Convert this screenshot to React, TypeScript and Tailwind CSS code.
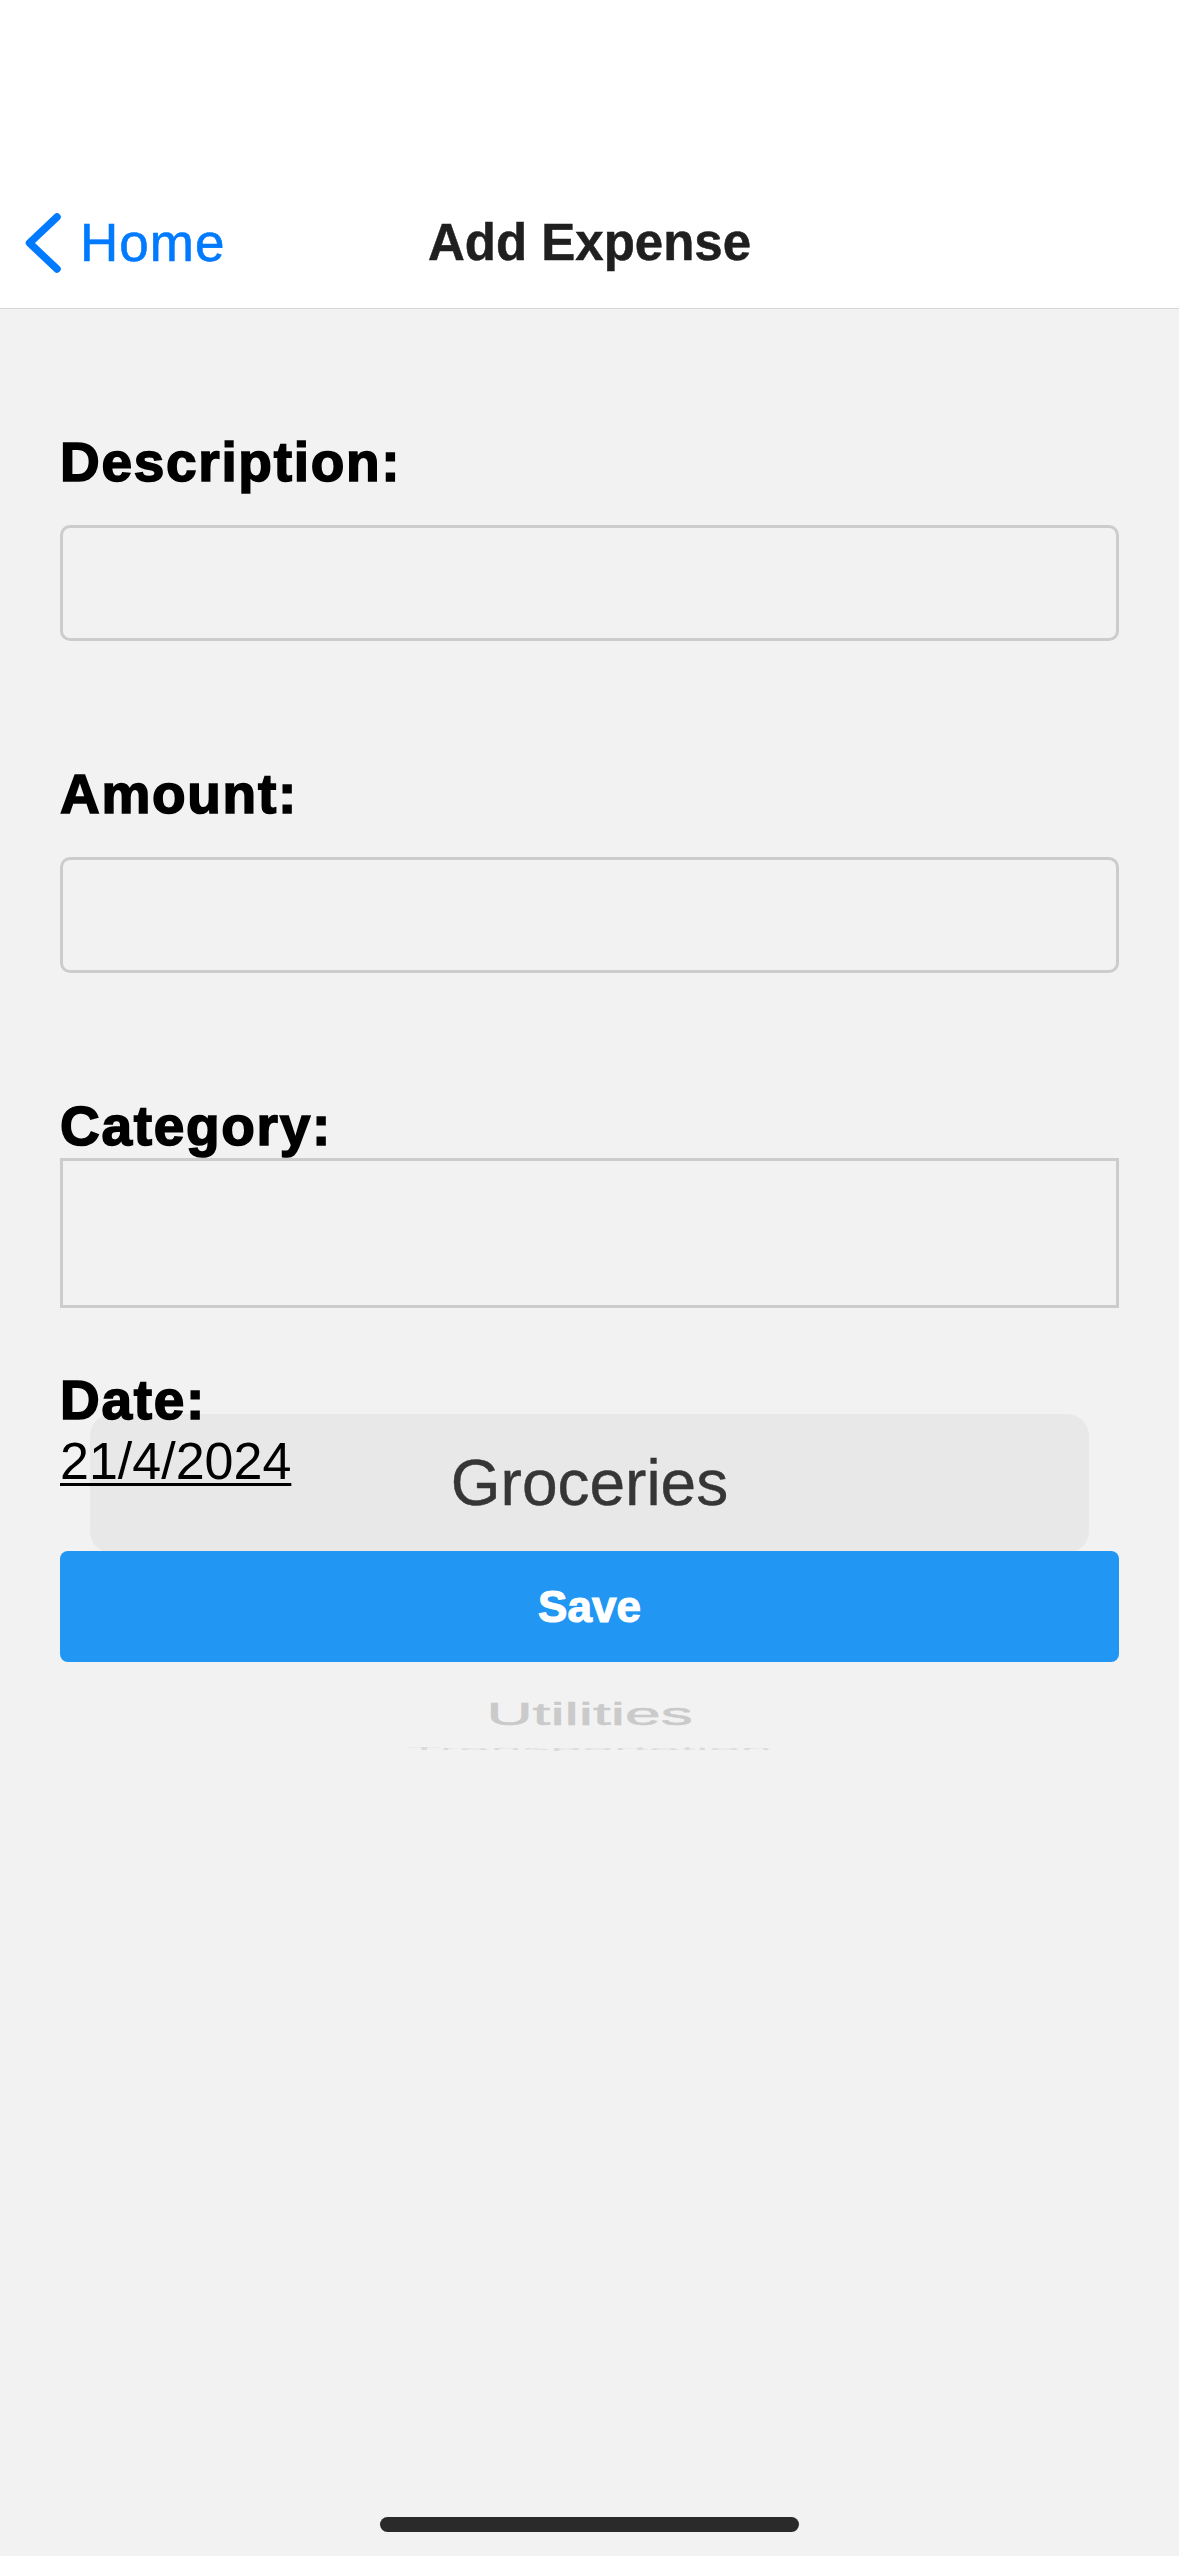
import React from "react";

export default function App() {
  return (
    <div className="flex h-[2556px] w-[1179px] flex-col overflow-hidden bg-[#f2f2f2] font-['Liberation_Sans',Arial,sans-serif]">
      {/* Navigation bar */}
      <div className="h-[309px] shrink-0 border-b border-[#d6d6d6] bg-white pt-[199px]">
        <div className="grid h-[88px] grid-cols-[1fr_auto_1fr] items-center">
          <div className="flex items-center pl-[24px]">
            <svg width="40" height="62" viewBox="0 0 40 62" fill="none">
              <path
                d="M33 5 L5.5 31 L33 57"
                stroke="#007aff"
                strokeWidth="7.5"
                strokeLinecap="round"
                strokeLinejoin="round"
              />
            </svg>
            <span className="ml-[16px] text-[53px] leading-[60px] tracking-[1px] text-[#007aff] [-webkit-text-stroke:0.6px_#007aff]">Home</span>
          </div>
          <div className="text-[51px] font-bold leading-[60px] text-[#1f1f1f] [-webkit-text-stroke:0.5px_#1f1f1f]">Add Expense</div>
          <div />
        </div>
      </div>

      {/* Form */}
      <div className="flex flex-col px-[60px] pt-[121px]">
        <label className="text-[55px] font-bold leading-[64px] tracking-[1.7px] text-black [-webkit-text-stroke:1.6px_black]">Description:</label>
        <div className="mt-[31px] h-[116px] rounded-[10px] border-[3px] border-[#cccccc]" />

        <label className="mt-[121px] text-[55px] font-bold leading-[64px] tracking-[1.7px] text-black [-webkit-text-stroke:1.6px_black]">Amount:</label>
        <div className="mt-[31px] h-[116px] rounded-[10px] border-[3px] border-[#cccccc]" />

        <label className="mt-[121px] text-[55px] font-bold leading-[64px] tracking-[1.7px] text-black [-webkit-text-stroke:1.6px_black]">Category:</label>
        <div className="relative z-0 h-[150px] border-[3px] border-[#cccccc]">
          {/* Picker wheel overflowing the box */}
          <div className="pointer-events-none absolute left-0 right-0 top-0 h-[648px]">
            <div className="absolute left-[27px] right-[27px] top-[253px] flex h-[139px] items-center justify-center rounded-[22px] bg-[#e8e8e8]">
              <span className="text-[64px] leading-[139px] text-[#363636] [-webkit-text-stroke:0.4px_#363636]">Groceries</span>
            </div>
            <div className="absolute left-0 right-0 top-[521px] h-[64px] scale-y-[0.48] text-center text-[64px] leading-[64px] text-[#cacaca] [-webkit-text-stroke:1px_#cacaca]">
              Utilities
            </div>
            <div className="absolute left-0 right-0 top-[556px] h-[64px] scale-y-[0.05] text-center text-[57px] leading-[64px] text-[#dadada]">
              Transportation
            </div>
          </div>
        </div>

        <div className="relative z-10 mt-[61px] flex flex-col">
          <label className="text-[55px] font-bold leading-[62px] tracking-[1.7px] text-black [-webkit-text-stroke:1.6px_black]">Date:</label>
          <span className="self-start text-[52px] leading-[60px] text-black underline decoration-[3px] underline-offset-[4px]">
            21/4/2024
          </span>
        </div>

        <button className="relative z-10 mt-[60px] flex h-[111px] items-center justify-center rounded-[8px] bg-[#2196f3]">
          <span className="text-[44px] font-bold leading-[50px] text-white [-webkit-text-stroke:1.2px_white]">Save</span>
        </button>
      </div>

      {/* Home indicator */}
      <div className="mx-auto mb-[24px] mt-auto h-[15px] w-[419px] shrink-0 rounded-full bg-[#2a2a2a]" />
    </div>
  );
}
